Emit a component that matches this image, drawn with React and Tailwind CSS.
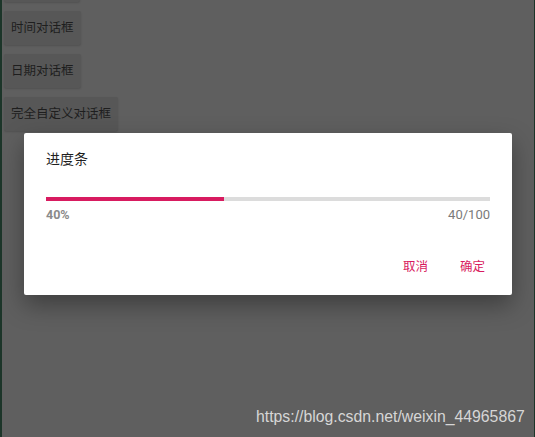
export default function App() {
  const value = 40;
  const max = 100;
  const pct = (value / max) * 100;

  const buttons = ["", "时间对话框", "日期对话框", "完全自定义对话框"];

  return (
    <div className="relative h-[437px] w-[535px] overflow-hidden border-l-2 border-r border-[#1c3529] bg-[#5f5f5f] font-['Roboto','Noto_Sans_CJK_SC',sans-serif]">
      {/* demo buttons behind the dim overlay */}
      <div className="mt-[-32px] flex flex-col items-start gap-[9px] pl-[2px]">
        {buttons.map((b, i) => (
          <div
            key={i}
            className="flex h-[34px] min-w-[76px] items-center rounded-[2px] bg-[#575757] px-[7px] text-[12.5px] text-[#1e1e1e] shadow-[0_1px_2px_rgba(0,0,0,0.15)]"
          >
            {b}
          </div>
        ))}
      </div>

      {/* progress dialog */}
      <div className="absolute left-[22px] top-[133px] flex h-[162px] w-[488px] flex-col rounded-[2px] bg-white px-[22px] pt-[16px] shadow-[0_10px_24px_rgba(0,0,0,0.35)]">
        <div className="text-[14px] leading-[20px] text-[#1f1f1f]">进度条</div>
        <div className="mt-[28px] h-[4px] w-full bg-[#dcdcdc]">
          <div className="h-full bg-[#d81b60]" style={{ width: `${pct}%` }} />
        </div>
        <div className="mt-[6px] flex items-center justify-between leading-[16px]">
          <span className="text-[12.5px] font-bold text-[#8a8a8a]">{value}%</span>
          <span className="text-[13px] text-[#7a7a7a]">
            {value}/{max}
          </span>
        </div>
        <div className="mt-[35px] flex justify-end gap-[32px] pr-[5px] text-[12.5px] leading-[18px] text-[#d81b60]">
          <span>取消</span>
          <span>确定</span>
        </div>
      </div>

      <div className="absolute left-[254px] top-[408px] font-['Liberation_Sans',sans-serif] text-[15.8px] leading-[18px] text-[#d6d6d6]">
        https://blog.csdn.net/weixin_44965867
      </div>
    </div>
  );
}
